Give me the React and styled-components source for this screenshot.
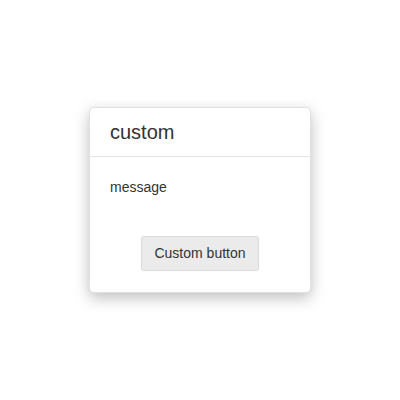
import React from "react";
import styled, { createGlobalStyle } from "styled-components";

const Global = createGlobalStyle`
  html, body { margin: 0; padding: 0; background: #fff; }
  body { font-family: "Liberation Sans", Arial, sans-serif; color: #333; }
`;

const Page = styled.div`
  width: 400px;
  height: 400px;
  display: flex;
  align-items: center;
  justify-content: center;
`;

const Dialog = styled.div`
  width: 222px;
  box-sizing: border-box;
  background: #fff;
  border: 1px solid rgba(0, 0, 0, 0.12);
  border-radius: 5px;
  box-shadow: 0 5px 15px rgba(0, 0, 0, 0.25);
  display: flex;
  flex-direction: column;
`;

const Header = styled.div`
  height: 48px;
  padding: 0 20px;
  display: flex;
  align-items: center;
  border-bottom: 1px solid #e2e2e2;
  font-size: 20px;
  color: #333;
`;

const Body = styled.div`
  padding: 20px 20px 39px;
  font-size: 14px;
  line-height: 20px;
  color: #333;
`;

const Footer = styled.div`
  padding: 0 20px 21px;
  display: flex;
  justify-content: center;
`;

const Button = styled.button`
  font-family: "Liberation Sans", Arial, sans-serif;
  font-size: 14px;
  line-height: 17px;
  padding: 8px 12px;
  color: #333;
  background: #ebebeb;
  border: 1px solid #dadada;
  border-radius: 3px;
`;

export default function App() {
  return (
    <>
      <Global />
      <Page>
        <Dialog>
          <Header>custom</Header>
          <Body>message</Body>
          <Footer>
            <Button>Custom button</Button>
          </Footer>
        </Dialog>
      </Page>
    </>
  );
}
